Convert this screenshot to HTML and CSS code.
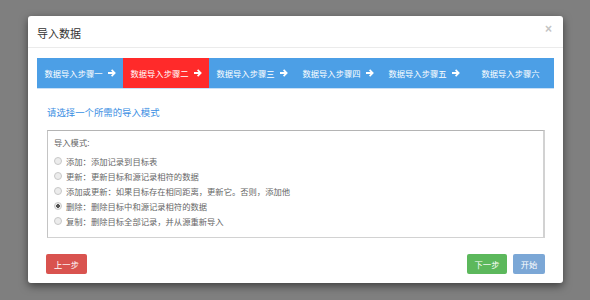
FILE: index.html
```html
<!DOCTYPE html>
<html lang="zh-CN">
<head>
    <meta charset="UTF-8">
    <meta name="viewport" content="width=device-width, initial-scale=1.0">
    <title>导入数据</title>
    <link rel="stylesheet" href="styles.css">
</head>
<body>
    <div class="modal">
        <div class="modal-header">
            <h4 class="modal-title">导入数据</h4>
            <span class="close">&times;</span>
        </div>
        <div class="modal-body">
            <ul class="steps">
                <li>数据导入步骤一 <svg class="arrow" viewBox="0 0 8 8"><path d="M0 3h4.5L3 1.5 4.2.3 7.9 4 4.2 7.7 3 6.5 4.5 5H0z"/></svg></li>
                <li class="active">数据导入步骤二 <svg class="arrow" viewBox="0 0 8 8"><path d="M0 3h4.5L3 1.5 4.2.3 7.9 4 4.2 7.7 3 6.5 4.5 5H0z"/></svg></li>
                <li>数据导入步骤三 <svg class="arrow" viewBox="0 0 8 8"><path d="M0 3h4.5L3 1.5 4.2.3 7.9 4 4.2 7.7 3 6.5 4.5 5H0z"/></svg></li>
                <li>数据导入步骤四 <svg class="arrow" viewBox="0 0 8 8"><path d="M0 3h4.5L3 1.5 4.2.3 7.9 4 4.2 7.7 3 6.5 4.5 5H0z"/></svg></li>
                <li>数据导入步骤五 <svg class="arrow" viewBox="0 0 8 8"><path d="M0 3h4.5L3 1.5 4.2.3 7.9 4 4.2 7.7 3 6.5 4.5 5H0z"/></svg></li>
                <li>数据导入步骤六</li>
            </ul>
            <div class="section">
                <h5 class="section-title">请选择一个所需的导入模式</h5>
                <div class="mode-box">
                    <div class="mode-label">导入模式:</div>
                    <label class="mode"><input type="radio" name="mode"> 添加：添加记录到目标表</label>
                    <label class="mode"><input type="radio" name="mode"> 更新：更新目标和源记录相符的数据</label>
                    <label class="mode"><input type="radio" name="mode"> 添加或更新：如果目标存在相同距离，更新它。否则，添加他</label>
                    <label class="mode"><input type="radio" name="mode" checked> 删除：删除目标中和源记录相符的数据</label>
                    <label class="mode"><input type="radio" name="mode"> 复制：删除目标全部记录，并从源重新导入</label>
                </div>
            </div>
        </div>
        <div class="modal-footer">
            <button class="btn btn-danger">上一步</button>
            <div class="right">
                <button class="btn btn-success">下一步</button>
                <button class="btn btn-primary" disabled>开始</button>
            </div>
        </div>
    </div>
</body>
</html>
```

FILE: styles.css
```css
body {
    margin: 0;
    height: 300px;
    background: #7f7f7f;
    font-family: "Liberation Sans", "Noto Sans CJK SC", sans-serif;
    overflow: hidden;
}
.modal {
    margin: 16px 0 0 28px;
    width: 535px;
    height: 267px;
    background: #fff;
    border-radius: 3px;
    box-shadow: 0 3px 8px rgba(0, 0, 0, .5);
    display: flex;
    flex-direction: column;
}
.modal-header {
    height: 31px;
    border-bottom: 1px solid #ebebeb;
    display: flex;
    align-items: center;
    justify-content: space-between;
    padding: 0 11px 0 9px;
}
.modal-title {
    margin: 2px 0 0;
    font-size: 11px;
    font-weight: normal;
    color: #333;
}
.close {
    color: #c4c4c4;
    font-size: 12px;
    font-weight: bold;
    margin-top: -5px;
}
.modal-body {
    padding: 10px 9px 0;
}
.steps {
    list-style: none;
    margin: 0;
    padding: 0;
    display: flex;
    height: 30px;
    background: #4c9fe6;
    border-bottom: 1px solid #c9e0f6;
}
.steps li {
    width: 86px;
    display: flex;
    align-items: center;
    justify-content: center;
    gap: 5px;
    color: #fff;
    font-size: 8.3px;
}
.steps li:last-child {
    width: 87px;
}
.steps li.active {
    background: #ff2a2a;
}
.arrow {
    width: 8px;
    height: 8px;
    fill: #fff;
}
.section {
    padding: 0 9px 0 10px;
}
.section-title {
    margin: 16px 0 11px;
    font-size: 9.4px;
    font-weight: normal;
    color: #3a8ee3;
}
.mode-box {
    height: 101px;
    border: 1px solid #d2d2d2;
    border-top-color: #b4b4b4;
    border-left-color: #c4c4c4;
    border-right-width: 2px;
    padding: 5px 6px 0;
    color: #666;
    font-size: 8.3px;
}
.mode-label {
    height: 15px;
    line-height: 15px;
    margin-bottom: 2px;
}
.mode {
    display: flex;
    align-items: center;
    height: 15px;
    gap: 4px;
}
.mode input {
    appearance: none;
    margin: 0;
    width: 8px;
    height: 8px;
    border: 1px solid #c8c8c8;
    border-radius: 50%;
    background: #ececec;
    box-sizing: border-box;
}
.mode input:checked {
    background: radial-gradient(circle, #555 0 1.6px, #ececec 2px);
}
.modal-footer {
    margin-top: auto;
    padding: 0 18px 9px 18px;
    display: flex;
    justify-content: space-between;
}
.right {
    display: flex;
    gap: 6px;
}
.btn {
    height: 20px;
    padding: 0;
    border: none;
    border-radius: 2px;
    color: #fff;
    font-family: inherit;
    font-size: 8.3px;
}
.btn-danger {
    width: 41px;
    background: #d9534f;
}
.btn-success {
    width: 40px;
    background: #5cb85c;
}
.btn-primary {
    width: 32px;
    background: #7ba7d6;
}
```
